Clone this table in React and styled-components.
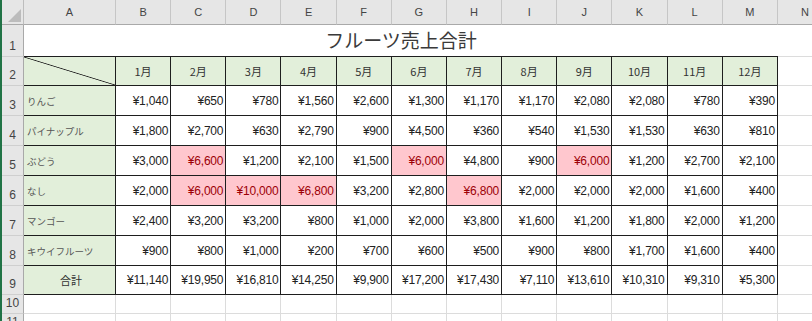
import React from 'react';
import styled, { createGlobalStyle, css } from 'styled-components';

const GlobalStyle = createGlobalStyle`
  body {
    margin: 0;
    background: #ffffff;
    font-family: "Liberation Sans", "Noto Sans CJK JP", sans-serif;
  }
`;

const MONTHS = ['1月', '2月', '3月', '4月', '5月', '6月', '7月', '8月', '9月', '10月', '11月', '12月'];
const COLUMNS = ['A', 'B', 'C', 'D', 'E', 'F', 'G', 'H', 'I', 'J', 'K', 'L', 'M', 'N'];

const FRUITS = [
  { name: 'りんご', values: [1040, 650, 780, 1560, 2600, 1300, 1170, 1170, 2080, 2080, 780, 390] },
  { name: 'パイナップル', values: [1800, 2700, 630, 2790, 900, 4500, 360, 540, 1530, 1530, 630, 810] },
  { name: 'ぶどう', values: [3000, 6600, 1200, 2100, 1500, 6000, 4800, 900, 6000, 1200, 2700, 2100] },
  { name: 'なし', values: [2000, 6000, 10000, 6800, 3200, 2800, 6800, 2000, 2000, 2000, 1600, 400] },
  { name: 'マンゴー', values: [2400, 3200, 3200, 800, 1000, 2000, 3800, 1600, 1200, 1800, 2000, 1200] },
  { name: 'キウイフルーツ', values: [900, 800, 1000, 200, 700, 600, 500, 900, 800, 1700, 1600, 400] },
];

const TOTALS = MONTHS.map((_, i) => FRUITS.reduce((sum, f) => sum + f.values[i], 0));

const yen = (n) => '¥' + n.toLocaleString('en-US');

const Window = styled.div`
  display: flex;
  width: 812px;
  height: 321px;
  overflow: hidden;
  background: #ffffff;
`;

const EdgeStrip = styled.div`
  width: 2px;
  flex-shrink: 0;
  background: #217346;
`;

const Sheet = styled.div`
  display: grid;
  grid-template-columns: 22px 92px repeat(13, 55.17px);
  grid-template-rows: 25px 32px 29px repeat(6, 30px) 29px 19px 19px;
  flex-shrink: 0;
`;

const Corner = styled.div`
  position: relative;
  background: #e6e6e6;
  border-right: 1px solid #bdbdbd;
  border-bottom: 1px solid #a9a9a9;

  &::after {
    content: '';
    position: absolute;
    right: 2px;
    bottom: 2px;
    border-style: solid;
    border-width: 0 0 13px 13px;
    border-color: transparent transparent #bcbcbc transparent;
  }
`;

const ColHead = styled.div`
  display: flex;
  align-items: center;
  justify-content: center;
  background: #e6e6e6;
  border-right: 1px solid #c6c6c6;
  border-bottom: 1px solid #a9a9a9;
  color: #444444;
  font-size: 11px;
`;

const RowHead = styled.div`
  display: flex;
  align-items: flex-end;
  justify-content: center;
  padding-bottom: 3px;
  box-sizing: border-box;
  background: #e6e6e6;
  border-right: 1px solid #a9a9a9;
  border-bottom: 1px solid #cfcfcf;
  color: #444444;
  font-size: 12px;
`;

const TitleCell = styled.div`
  grid-column: span 13;
  display: flex;
  align-items: center;
  justify-content: center;
  padding-bottom: 3px;
  box-sizing: border-box;
  border-bottom: 1px solid #1e1e1e;
  color: #3a3a3a;
  font-family: "Noto Sans CJK JP", sans-serif;
  font-size: 19px;
`;

const tones = {
  plain: css`background: #ffffff; color: #222222;`,
  green: css`background: #e2efda; color: #333333;`,
  pink: css`background: #ffc7ce; color: #9c0006;`,
};

const Cell = styled.div`
  display: flex;
  align-items: center;
  box-sizing: border-box;
  min-width: 0;
  overflow: hidden;
  white-space: nowrap;
  border-right: 1px solid ${(p) => (p.$boxed ? '#1e1e1e' : '#dcdcdc')};
  border-bottom: 1px solid ${(p) => (p.$boxed ? '#1e1e1e' : '#dcdcdc')};
  ${(p) => tones[p.$tone || 'plain']}
`;

const Amount = styled(Cell)`
  justify-content: flex-end;
  padding-right: 2px;
  font-size: 12px;
  letter-spacing: -0.2px;
`;

const Month = styled(Cell)`
  justify-content: center;
  font-family: "Noto Sans CJK JP", sans-serif;
  font-size: 11px;
`;

const Label = styled(Cell)`
  justify-content: ${(p) => (p.$center ? 'center' : 'flex-start')};
  padding-left: 3px;
  font-family: "Noto Sans CJK JP", sans-serif;
  font-size: ${(p) => (p.$center ? '11px' : '9.5px')};
  color: ${(p) => (p.$center ? '#333333' : '#555555')};
`;

const DiagonalCell = styled(Cell)`
  background:
    linear-gradient(to top right, transparent calc(50% - 0.8px), #222222 50%, transparent calc(50% + 0.8px)),
    #e2efda;
`;

const Blank = styled(Cell)``;

const App = () => {
  return (
    <>
      <GlobalStyle />
      <Window>
        <EdgeStrip />
        <Sheet>
          <Corner />
          {COLUMNS.map((c) => (
            <ColHead key={c}>{c}</ColHead>
          ))}

          <RowHead>1</RowHead>
          <TitleCell>フルーツ売上合計</TitleCell>
          <Blank />

          <RowHead>2</RowHead>
          <DiagonalCell $boxed $tone="green" />
          {MONTHS.map((m) => (
            <Month key={m} $boxed $tone="green">{m}</Month>
          ))}
          <Blank />

          {FRUITS.map((fruit, r) => (
            <React.Fragment key={fruit.name}>
              <RowHead>{r + 3}</RowHead>
              <Label $boxed $tone="green">{fruit.name}</Label>
              {fruit.values.map((v, i) => (
                <Amount key={i} $boxed $tone={v >= 6000 ? 'pink' : 'plain'}>
                  {yen(v)}
                </Amount>
              ))}
              <Blank />
            </React.Fragment>
          ))}

          <RowHead>9</RowHead>
          <Label $boxed $center $tone="green">合計</Label>
          {TOTALS.map((v, i) => (
            <Amount key={i} $boxed>{yen(v)}</Amount>
          ))}
          <Blank />

          {[10, 11].map((n) => (
            <React.Fragment key={n}>
              <RowHead>{n}</RowHead>
              {COLUMNS.map((c) => (
                <Blank key={c} />
              ))}
            </React.Fragment>
          ))}
        </Sheet>
      </Window>
    </>
  );
};

export default App;
